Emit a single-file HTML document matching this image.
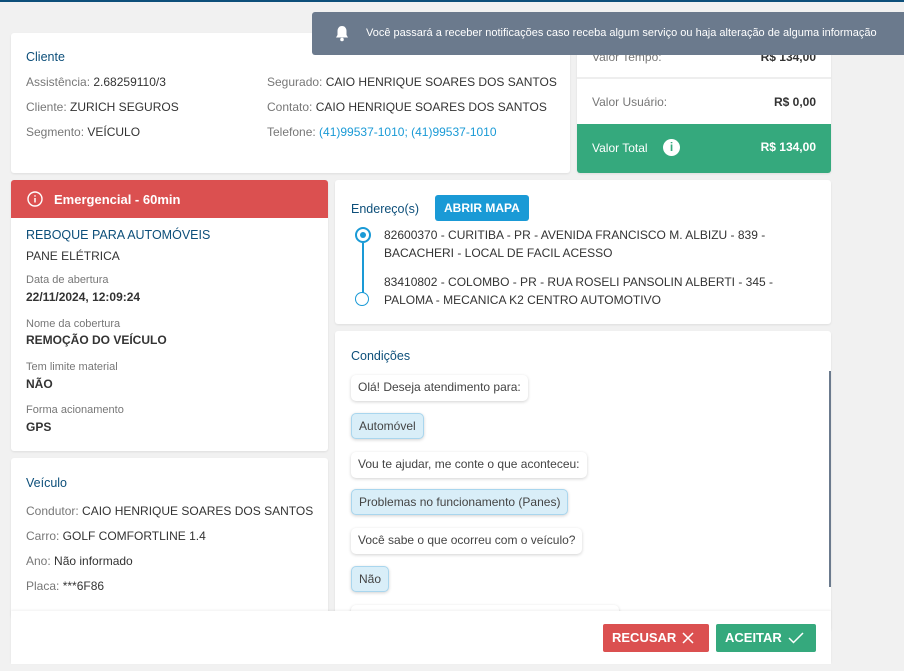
<!DOCTYPE html>
<html><head><meta charset="utf-8"><style>
*{margin:0;padding:0;box-sizing:border-box}
body{width:904px;height:671px;background:#f1f1f1;font-family:"Liberation Sans",sans-serif;font-size:12px;color:#333;position:relative;overflow:hidden}
.card{position:absolute;background:#fff;border-radius:3px;box-shadow:0 1px 2px rgba(0,0,0,.08)}
.a{position:absolute;white-space:nowrap}
.lbl{color:#777}
.t{color:#0d4f7a;font-size:12.5px}
.bubble{position:absolute;left:16px;height:26px;line-height:25px;padding:0 7px;border-radius:5px;background:#fff;box-shadow:0 1px 3px rgba(0,0,0,.18);white-space:nowrap;color:#444}
.bubble.b{background:#d9eef8;border:1px solid #a9d6ee}
.small{font-size:11px;color:#777}
.bold{font-weight:bold;color:#333}
</style></head><body>
<div style="position:absolute;left:0;top:0;width:904px;height:2px;background:#0d4f7a"></div>

<div class="card" style="left:11px;top:33px;width:559px;height:140px">
 <div class="a t" style="left:15px;top:17px">Cliente</div>
 <div class="a" style="left:15px;top:42px"><span class="lbl">Assistência:</span> 2.68259110/3</div>
 <div class="a" style="left:15px;top:67px"><span class="lbl">Cliente:</span> ZURICH SEGUROS</div>
 <div class="a" style="left:15px;top:92px"><span class="lbl">Segmento:</span> VEÍCULO</div>
 <div class="a" style="left:256px;top:42px"><span class="lbl">Segurado:</span> CAIO HENRIQUE SOARES DOS SANTOS</div>
 <div class="a" style="left:256px;top:67px"><span class="lbl">Contato:</span> CAIO HENRIQUE SOARES DOS SANTOS</div>
 <div class="a" style="left:256px;top:92px"><span class="lbl">Telefone:</span> <span style="color:#1a9ad6">(41)99537-1010; (41)99537-1010</span></div>
</div>

<div class="card" style="left:577px;top:33px;width:254px;height:140px;overflow:hidden">
 <div class="a lbl" style="left:15px;top:17px">Valor Tempo:</div>
 <div class="a bold" style="right:15px;top:17px">R$ 134,00</div>
 <div style="position:absolute;left:0;top:44px;width:100%;height:2px;background:#eee"></div>
 <div class="a lbl" style="left:15px;top:62px">Valor Usuário:</div>
 <div class="a bold" style="right:15px;top:62px">R$ 0,00</div>
 <div style="position:absolute;left:0;top:91px;width:100%;height:49px;background:#35a97d;color:#fff">
  <div class="a" style="left:15px;top:17px">Valor Total</div>
  <div class="a" style="left:86px;top:15px;width:17px;height:17px;border-radius:50%;background:#fff;color:#35a97d;font-weight:bold;font-size:12px;text-align:center;line-height:17px">i</div>
  <div class="a" style="right:15px;top:16px;font-weight:bold">R$ 134,00</div>
 </div>
</div>

<div style="position:absolute;left:312px;top:12px;width:600px;height:43px;background:#6b7a8d;border-radius:3px;color:#fff;font-size:11px">
 <svg style="position:absolute;left:23px;top:13px" width="14" height="17" viewBox="0 0 14 17"><path d="M7 1C4 1 2.5 3.5 2.5 6v4L1 12.5h12L11.5 10V6C11.5 3.5 10 1 7 1z" fill="#fff"/><circle cx="7" cy="14.5" r="1.8" fill="#fff"/></svg>
 <div class="a" style="left:54px;top:15px">Você passará a receber notificações caso receba algum serviço ou haja alteração de alguma informação</div>
</div>

<div class="card" style="left:11px;top:180px;width:317px;height:271px;overflow:hidden">
 <div style="position:absolute;left:0;top:0;width:100%;height:38px;background:#db5050;color:#fff;font-weight:bold;font-size:13px">
  <svg style="position:absolute;left:16px;top:11px" width="16" height="16" viewBox="0 0 16 16"><circle cx="8" cy="8" r="7" fill="none" stroke="#fff" stroke-width="1.4"/><path d="M8 7v4.5M8 4.3v1.3" stroke="#fff" stroke-width="1.5"/></svg>
  <div class="a" style="left:43px;top:12px">Emergencial - 60min</div>
 </div>
 <div class="a t" style="left:15px;top:48px">REBOQUE PARA AUTOMÓVEIS</div>
 <div class="a" style="left:15px;top:69px">PANE ELÉTRICA</div>
 <div class="a small" style="left:15px;top:94px">Data de abertura</div>
 <div class="a bold" style="left:15px;top:110px">22/11/2024, 12:09:24</div>
 <div class="a small" style="left:15px;top:138px">Nome da cobertura</div>
 <div class="a bold" style="left:15px;top:153px">REMOÇÃO DO VEÍCULO</div>
 <div class="a small" style="left:15px;top:181px">Tem limite material</div>
 <div class="a bold" style="left:15px;top:197px">NÃO</div>
 <div class="a small" style="left:15px;top:224px">Forma acionamento</div>
 <div class="a bold" style="left:15px;top:240px">GPS</div>
</div>

<div class="card" style="left:11px;top:458px;width:317px;height:160px">
 <div class="a t" style="left:15px;top:18px">Veículo</div>
 <div class="a" style="left:15px;top:46px"><span class="lbl">Condutor:</span> CAIO HENRIQUE SOARES DOS SANTOS</div>
 <div class="a" style="left:15px;top:71px"><span class="lbl">Carro:</span> GOLF COMFORTLINE 1.4</div>
 <div class="a" style="left:15px;top:96px"><span class="lbl">Ano:</span> Não informado</div>
 <div class="a" style="left:15px;top:121px"><span class="lbl">Placa:</span> ***6F86</div>
</div>

<div class="card" style="left:335px;top:180px;width:496px;height:144px">
 <div class="a t" style="left:16px;top:22px">Endereço(s)</div>
 <div class="a" style="left:100px;top:15px;height:26px;line-height:26px;padding:0 9px;background:#1a9ad6;color:#fff;font-weight:bold;border-radius:3px">ABRIR MAPA</div>
 <div style="position:absolute;left:20px;top:47px;width:16px;height:16px;border:2px solid #1a9ad6;border-radius:50%;background:#fff"><div style="position:absolute;left:3px;top:3px;width:6px;height:6px;border-radius:50%;background:#1a9ad6"></div></div>
 <div style="position:absolute;left:27px;top:63px;width:2px;height:50px;background:#1a9ad6"></div>
 <div style="position:absolute;left:20px;top:112px;width:14px;height:14px;border:1.5px solid #1a9ad6;border-radius:50%;background:#fff"></div>
 <div class="a" style="left:49px;top:46px;line-height:18px">82600370 - CURITIBA - PR - AVENIDA FRANCISCO M. ALBIZU - 839 -<br>BACACHERI - LOCAL DE FACIL ACESSO</div>
 <div class="a" style="left:49px;top:93px;line-height:18px">83410802 - COLOMBO - PR - RUA ROSELI PANSOLIN ALBERTI - 345 -<br>PALOMA - MECANICA K2 CENTRO AUTOMOTIVO</div>
</div>

<div class="card" style="left:335px;top:331px;width:496px;height:300px;overflow:hidden">
 <div class="a t" style="left:16px;top:18px">Condições</div>
 <div class="bubble" style="top:44px">Olá! Deseja atendimento para:</div>
 <div class="bubble b" style="top:82px">Automóvel</div>
 <div class="bubble" style="top:121px">Vou te ajudar, me conte o que aconteceu:</div>
 <div class="bubble b" style="top:158px">Problemas no funcionamento (Panes)</div>
 <div class="bubble" style="top:197px">Você sabe o que ocorreu com o veículo?</div>
 <div class="bubble b" style="top:235px">Não</div>
 <div class="bubble" style="top:274px;width:268px">&nbsp;</div>
 <div style="position:absolute;left:494px;top:40px;width:2px;height:216px;background:#6b7a8d"></div>
</div>

<div style="position:absolute;left:11px;top:611px;width:820px;height:53px;background:#fff;box-shadow:0 -1px 2px rgba(0,0,0,.06)">
 <div class="a" style="left:592px;top:13px;width:106px;height:28px;background:#db5050;border-radius:2px;color:#fff;font-weight:bold;font-size:13px;line-height:28px;padding-left:9px">RECUSAR
  <svg style="position:absolute;left:79px;top:8px" width="12" height="12" viewBox="0 0 12 12"><path d="M1 1L11 11M11 1L1 11" stroke="#fff" stroke-width="1.5"/></svg></div>
 <div class="a" style="left:705px;top:13px;width:100px;height:28px;background:#35a97d;border-radius:2px;color:#fff;font-weight:bold;font-size:13px;line-height:28px;padding-left:9px">ACEITAR
  <svg style="position:absolute;left:72px;top:8px" width="16" height="12" viewBox="0 0 16 12"><path d="M1 6L5.5 10.5L15 1" fill="none" stroke="#fff" stroke-width="1.5"/></svg></div>
</div>
</body></html>
